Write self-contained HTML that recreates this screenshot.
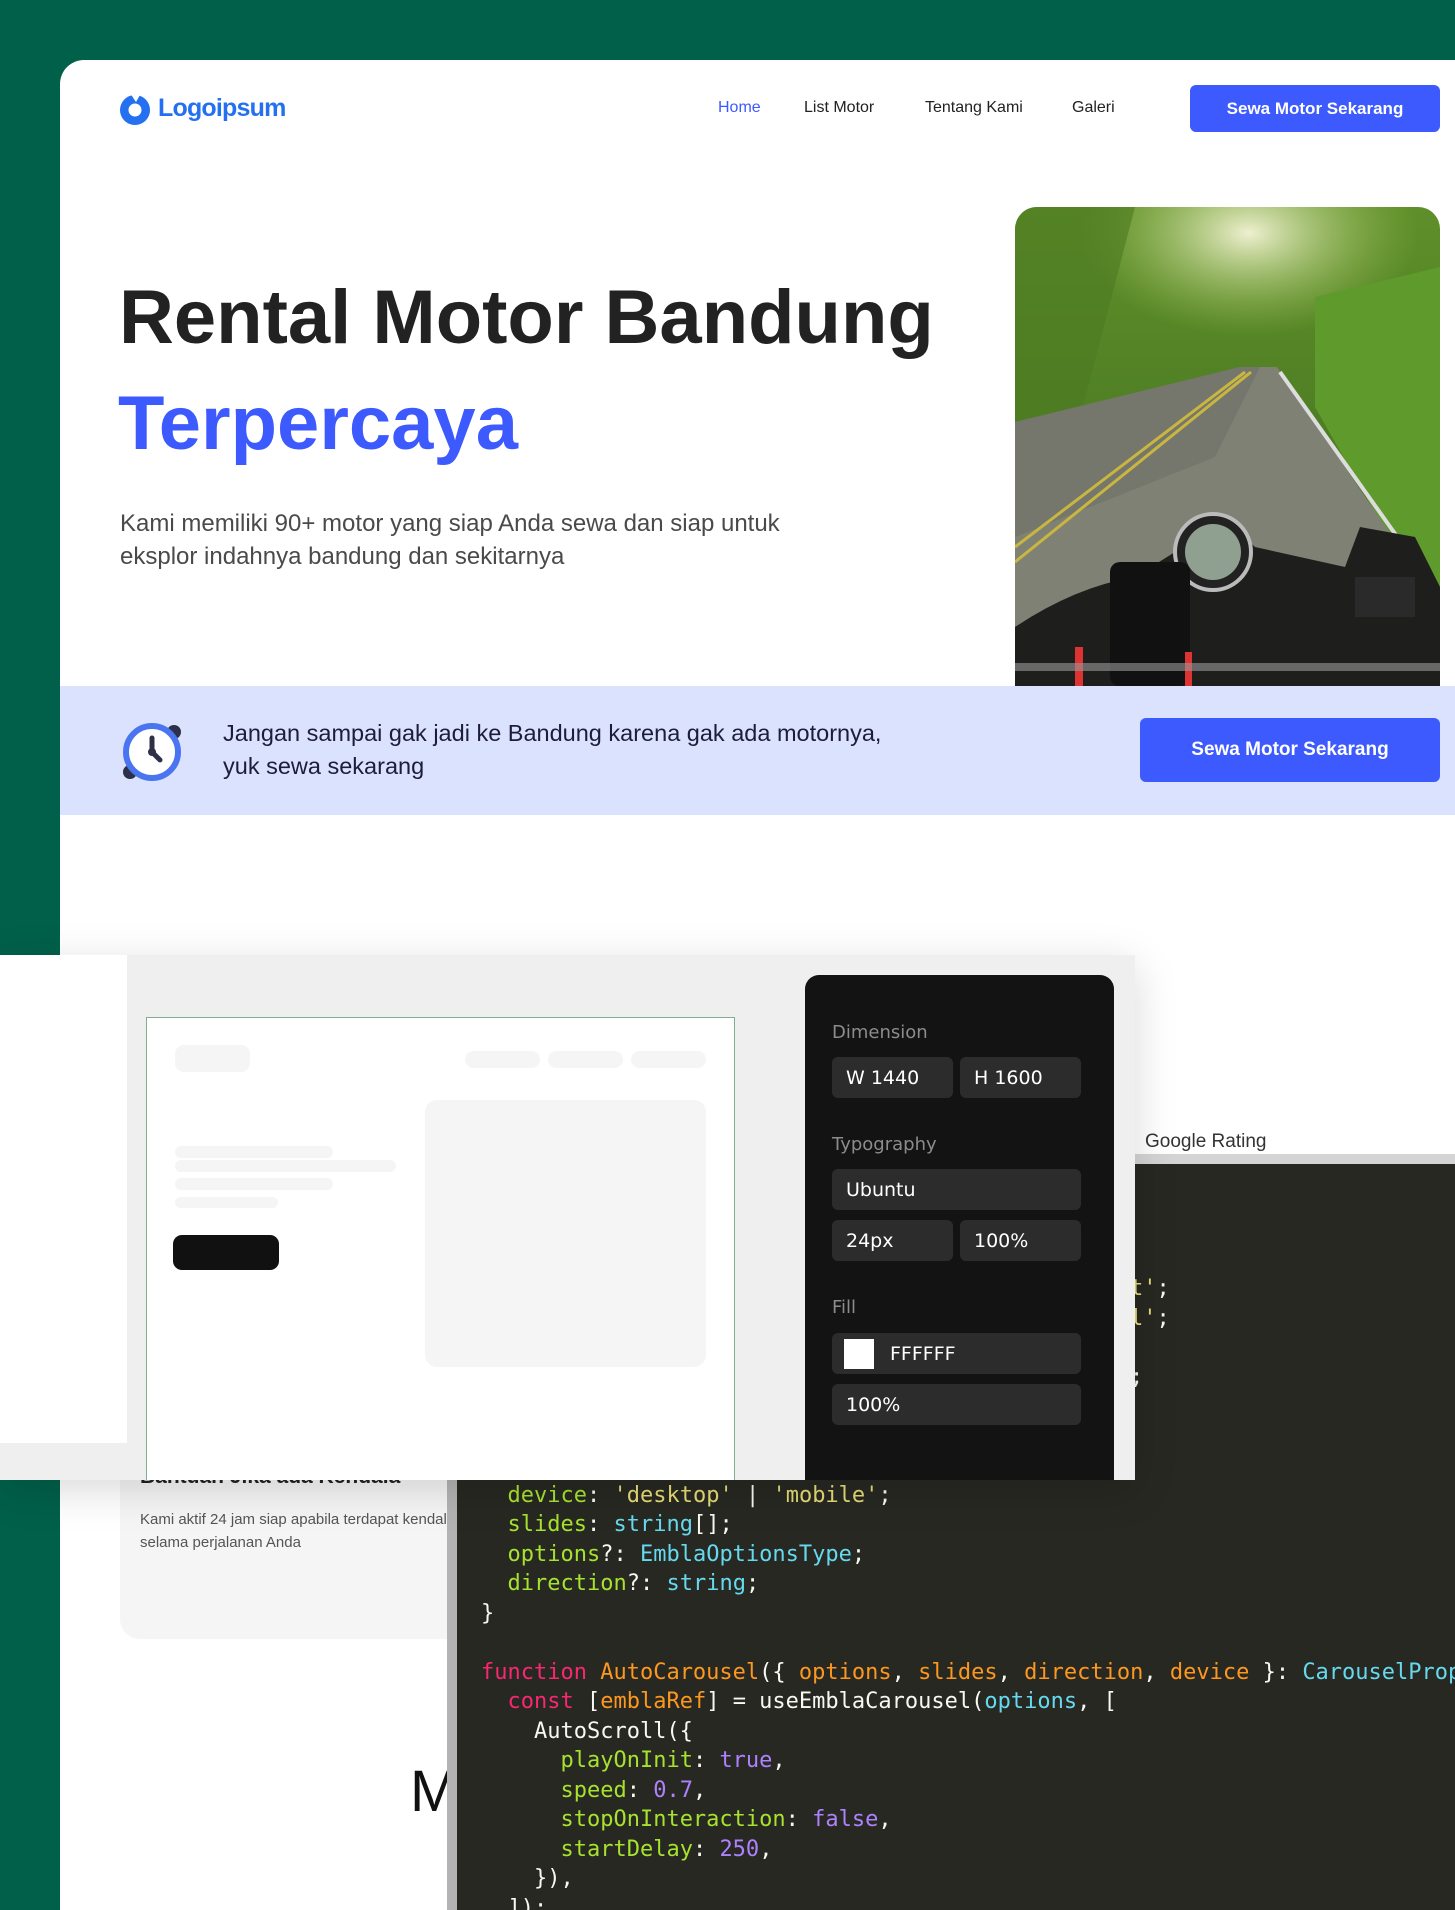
<!DOCTYPE html>
<html><head><meta charset="utf-8"><style>
*{margin:0;padding:0;box-sizing:border-box}
body{width:1455px;height:1910px;overflow:hidden;background:#00604a;position:relative;font-family:"Liberation Sans",sans-serif}
.abs{position:absolute}
.card{left:60px;top:60px;width:1395px;height:1850px;background:#fff;border-top-left-radius:24px}
.nav{font-size:16px;color:#222;top:99px}
.btn{background:#3d5afe;color:#fff;font-weight:700;border-radius:6px;display:flex;align-items:center;justify-content:center}
.code{left:447px;top:1154px;width:1008px;height:756px;background:#272822;border-left:10px solid #b3b3b3;border-top:10px solid #d4d4d4;overflow:hidden}
pre{font-family:"DejaVu Sans Mono","Liberation Mono",monospace;font-size:22px;line-height:29.5px;color:#f8f8f2;position:absolute;left:24px;top:110px;white-space:pre}
.k{color:#f92672}.s{color:#e6db74}.p{color:#a6e22e}.t{color:#66d9ef}.o{color:#fd971f}.n{color:#ae81ff}
.fld{background:#2c2c2c;border-radius:6px;color:#fff;font-size:19px;display:flex;align-items:center;padding-left:14px;height:41px;font-family:"DejaVu Sans",sans-serif}
.lbl{color:#8c8c8c;font-size:18px;font-family:"DejaVu Sans",sans-serif}
.sk{background:#f5f5f5;border-radius:9px}
</style></head><body>
<div class="abs card"></div>
<svg class="abs" style="left:118px;top:92px" width="34" height="34" viewBox="0 0 34 34"><circle cx="17" cy="18" r="15" fill="#2570f0"/><circle cx="17" cy="18" r="6.5" fill="#fff"/><path d="M12 1 L22 3 L18 10 Z" fill="#fff"/></svg>
<div class="abs" style="left:158px;top:94px;font-size:25px;font-weight:700;color:#2570f0;letter-spacing:-0.8px">Logoipsum</div>
<div class="abs nav" style="left:718px;color:#3d5afe">Home</div>
<div class="abs nav" style="left:804px">List Motor</div>
<div class="abs nav" style="left:925px">Tentang Kami</div>
<div class="abs nav" style="left:1072px">Galeri</div>
<div class="abs btn" style="left:1190px;top:85px;width:250px;height:47px;font-size:17px">Sewa Motor Sekarang</div>
<div class="abs" style="left:119px;top:274px;font-size:76px;font-weight:700;color:#222">Rental Motor Bandung</div>
<div class="abs" style="left:118px;top:380px;font-size:76px;font-weight:700;color:#3d5afe">Terpercaya</div>
<div class="abs" style="left:120px;top:507px;font-size:24px;line-height:33px;color:#4a4a4a">Kami memiliki 90+ motor yang siap Anda sewa dan siap untuk<br>eksplor indahnya bandung dan sekitarnya</div>
<svg class="abs" style="left:1015px;top:207px;border-radius:22px 22px 0 0" width="425" height="479" viewBox="0 0 425 479">
<defs><linearGradient id="sky" x1="0" y1="0" x2="0" y2="1"><stop offset="0" stop-color="#5f8f2a"/><stop offset="1" stop-color="#3c6a1e"/></linearGradient>
<radialGradient id="lt" cx="0.55" cy="0.1" r="0.4"><stop offset="0" stop-color="#eef0d0"/><stop offset="1" stop-color="#9cc050" stop-opacity="0"/></radialGradient></defs>
<rect width="425" height="479" fill="url(#sky)"/>
<rect width="425" height="260" fill="url(#lt)"/>
<path d="M0 0 H120 L60 230 H0Z" fill="#4d7a22" opacity=".6"/>
<path d="M300 90 L425 60 V420 L300 200Z" fill="#5e9a2c"/>
<path d="M225 160 L262 160 L425 400 L425 479 L0 479 L0 215Z" fill="#7f8175"/>
<path d="M225 160 L245 160 L200 250 L0 330 L0 215Z" fill="#6e7066" opacity=".6"/>
<path d="M230 165 L0 340" stroke="#c9b640" stroke-width="3"/>
<path d="M236 165 L0 355" stroke="#c9b640" stroke-width="3"/>
<path d="M265 165 L425 390" stroke="#ddd" stroke-width="4"/>
<path d="M0 420 Q60 380 120 370 L160 345 Q200 300 240 340 L330 360 L345 320 L400 330 L425 380 V479 H0Z" fill="#1e1f1c"/>
<circle cx="198" cy="345" r="38" fill="#222" stroke="#bbb" stroke-width="4"/>
<circle cx="198" cy="345" r="28" fill="#8fa090"/>
<rect x="95" y="355" width="80" height="124" rx="10" fill="#111"/>
<rect x="60" y="440" width="8" height="39" fill="#d33"/><rect x="170" y="445" width="7" height="34" fill="#d33"/>
<path d="M0 460 H425" stroke="#999" stroke-width="8" opacity=".6"/>
<rect x="340" y="370" width="60" height="40" fill="#2a2a2a"/>
</svg>
<div class="abs" style="left:60px;top:686px;width:1395px;height:129px;background:#dae2fd"></div>
<svg class="abs" style="left:118px;top:718px" width="68" height="66" viewBox="0 0 68 66">
<circle cx="56" cy="14" r="7" fill="#2d3047"/><circle cx="12" cy="54" r="7" fill="#2d3047"/>
<circle cx="34" cy="34" r="26" fill="#fff" stroke="#4a74f0" stroke-width="6"/>
<path d="M34 20 V34 L42 42" stroke="#2d3047" stroke-width="5" stroke-linecap="round" fill="none"/><circle cx="34" cy="34" r="4" fill="#2d3047"/>
</svg>
<div class="abs" style="left:223px;top:717px;font-size:23.5px;line-height:33px;color:#1d1d3a">Jangan sampai gak jadi ke Bandung karena gak ada motornya,<br>yuk sewa sekarang</div>
<div class="abs btn" style="left:1140px;top:718px;width:300px;height:64px;font-size:19px">Sewa Motor Sekarang</div>
<div class="abs" style="left:1145px;top:1131px;font-size:19px;color:#333">Google Rating</div>
<div class="abs" style="left:120px;top:1450px;width:360px;height:189px;background:#f5f5f5;border-radius:20px"></div>
<div class="abs" style="left:140px;top:1465px;font-size:21px;font-weight:700;color:#222">Bantuan Jika ada Kendala</div>
<div class="abs" style="left:140px;top:1508px;font-size:15px;line-height:23px;color:#555;width:307px;white-space:nowrap;overflow:hidden">Kami aktif 24 jam siap apabila terdapat kendala<br>selama perjalanan Anda</div>
<div class="abs" style="left:410px;top:1758px;font-size:58px;color:#111">M</div>
<div class="abs code"><pre><span class="k">import</span> useEmblaCarousel <span class="k">from</span> <span class="s">'embla-carousel-react'</span>;
<span class="k">import</span> AutoScroll <span class="k">from</span> <span class="s">'embla-carousel-auto-scroll'</span>;
<span class="k">import</span> { cn } <span class="k">from</span> <span class="s">'@/lib/utils'</span>;
<span class="k">import</span> { EmblaOptionsType } <span class="k">from</span> <span class="s">'embla-carousel'</span>;


<span class="k">interface</span> <span class="t">CarouselProps</span> {
  <span class="p">device</span>: <span class="s">'desktop'</span> | <span class="s">'mobile'</span>;
  <span class="p">slides</span>: <span class="t">string</span>[];
  <span class="p">options</span>?: <span class="t">EmblaOptionsType</span>;
  <span class="p">direction</span>?: <span class="t">string</span>;
}

<span class="k">function</span> <span class="o">AutoCarousel</span>({ <span class="o">options</span>, <span class="o">slides</span>, <span class="o">direction</span>, <span class="o">device</span> }: <span class="t">CarouselProps</span>) {
  <span class="k">const</span> [<span class="o">emblaRef</span>] = useEmblaCarousel(<span class="t">options</span>, [
    AutoScroll({
      <span class="p">playOnInit</span>: <span class="n">true</span>,
      <span class="p">speed</span>: <span class="n">0.7</span>,
      <span class="p">stopOnInteraction</span>: <span class="n">false</span>,
      <span class="p">startDelay</span>: <span class="n">250</span>,
    }),
  ]);</pre></div>
<div class="abs" style="left:0;top:955px;width:1135px;height:525px;background:#efefef;box-shadow:0 10px 40px rgba(0,0,0,.15)"></div>
<div class="abs" style="left:0;top:955px;width:127px;height:488px;background:#fff"></div>
<div class="abs" style="left:146px;top:1017px;width:589px;height:463px;background:#fff;border:1.5px solid #7fae92;border-bottom:none"></div>
<div class="abs sk" style="left:175px;top:1045px;width:75px;height:27px"></div>
<div class="abs sk" style="left:465px;top:1051px;width:75px;height:17px"></div>
<div class="abs sk" style="left:548px;top:1051px;width:75px;height:17px"></div>
<div class="abs sk" style="left:631px;top:1051px;width:75px;height:17px"></div>
<div class="abs sk" style="left:425px;top:1100px;width:281px;height:267px;border-radius:12px"></div>
<div class="abs sk" style="left:175px;top:1146px;width:158px;height:12px"></div>
<div class="abs sk" style="left:175px;top:1160px;width:221px;height:12px"></div>
<div class="abs sk" style="left:175px;top:1178px;width:158px;height:12px"></div>
<div class="abs sk" style="left:175px;top:1197px;width:103px;height:11px"></div>
<div class="abs" style="left:173px;top:1235px;width:106px;height:35px;background:#111;border-radius:9px"></div>
<div class="abs" style="left:805px;top:975px;width:309px;height:505px;background:#131313;border-radius:14px 14px 0 0"></div>
<div class="abs lbl" style="left:832px;top:1022px">Dimension</div>
<div class="abs fld" style="left:832px;top:1057px;width:121px">W 1440</div>
<div class="abs fld" style="left:960px;top:1057px;width:121px">H 1600</div>
<div class="abs lbl" style="left:832px;top:1134px">Typography</div>
<div class="abs fld" style="left:832px;top:1169px;width:249px">Ubuntu</div>
<div class="abs fld" style="left:832px;top:1220px;width:121px">24px</div>
<div class="abs fld" style="left:960px;top:1220px;width:121px">100%</div>
<div class="abs lbl" style="left:832px;top:1297px">Fill</div>
<div class="abs fld" style="left:832px;top:1333px;width:249px"><span style="display:inline-block;width:30px;height:30px;background:#fff;margin-right:16px;margin-left:-2px"></span>FFFFFF</div>
<div class="abs fld" style="left:832px;top:1384px;width:249px">100%</div>
</body></html>
